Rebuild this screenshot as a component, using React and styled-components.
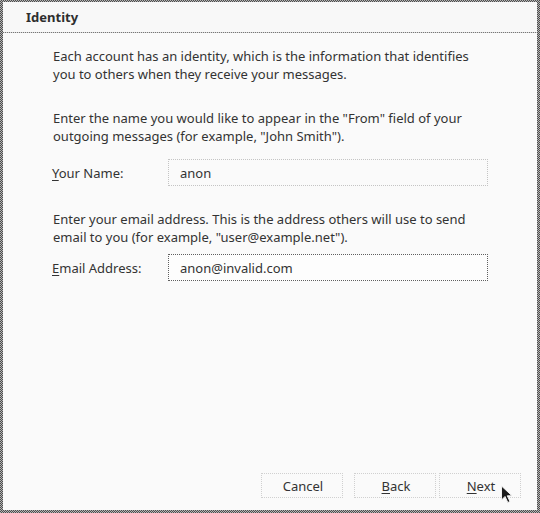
import React from 'react';
import styled, { createGlobalStyle } from 'styled-components';

const GlobalStyle = createGlobalStyle`
  html, body {
    margin: 0;
    padding: 0;
    background: #fafafa;
  }
  body {
    font-family: "Noto Sans", "Open Sans", "DejaVu Sans", sans-serif;
    font-size: 13px;
    color: #333;
  }
`;

const checker = `repeating-conic-gradient(#4d4d4d 0 25%, #b4b4b4 0 50%) 0 0 / 2px 2px`;

const Frame = styled.div`
  position: relative;
  box-sizing: border-box;
  width: 540px;
  height: 513px;
  padding: 2px 3px 3px 3px;
  background: ${checker};
`;

const Window = styled.div`
  display: flex;
  flex-direction: column;
  height: 100%;
  background: #fafafa;
`;

const Header = styled.div`
  display: flex;
  align-items: center;
  height: 30px;
  padding-left: 23px;
  font-weight: 700;
  font-size: 13px;
  color: #2e2e2e;
  background: #f8f8f8;
`;

const Divider = styled.div`
  height: 1px;
  background: repeating-linear-gradient(90deg, #777 0 1px, #d8d8d8 1px 2px);
`;

const Content = styled.div`
  padding: 14px 49px 0 50px;
`;

const Para = styled.p`
  margin: ${p => p.$top || 0}px 0 0 0;
  line-height: 18px;
`;

const Row = styled.div`
  display: flex;
  align-items: center;
  margin-top: ${p => p.$top}px;
`;

const Label = styled.label`
  width: 116px;
  flex: none;
  margin-left: -1px;
`;

const Field = styled.div`
  box-sizing: border-box;
  width: 320px;
  height: 27px;
  display: flex;
  align-items: center;
  padding-left: 11px;
  border: 1px dotted ${p => (p.$focused ? '#5f5f5f' : '#c4c4c4')};
  background: ${p => (p.$focused ? '#fdfdfd' : '#fafafa')};
`;

const Key = styled.span`
  text-decoration: underline;
  text-underline-offset: 2px;
`;

const Footer = styled.div`
  margin-top: auto;
  display: flex;
  justify-content: flex-end;
  padding: 0 16px 12px 0;
`;

const Button = styled.div`
  box-sizing: border-box;
  width: 82px;
  height: 25px;
  display: flex;
  align-items: center;
  justify-content: center;
  padding-left: 2px;
  margin-left: ${p => p.$gap || 0}px;
  border: 1px dotted #d0d0d0;
  color: #333;
`;

const Cursor = styled.svg`
  position: absolute;
  left: 500px;
  top: 485px;
`;

export default function App() {
  return (
    <>
      <GlobalStyle />
      <Frame>
        <Window>
          <Header>Identity</Header>
          <Divider />
          <Content>
            <Para>
              Each account has an identity, which is the information that identifies
              <br />
              you to others when they receive your messages.
            </Para>
            <Para $top={26}>
              Enter the name you would like to appear in the "From" field of your
              <br />
              outgoing messages (for example, "John Smith").
            </Para>
            <Row $top={14}>
              <Label><Key>Y</Key>our Name:</Label>
              <Field>anon</Field>
            </Row>
            <Para $top={24}>
              Enter your email address. This is the address others will use to send
              <br />
              email to you (for example, "user@example.net").
            </Para>
            <Row $top={8}>
              <Label><Key>E</Key>mail Address:</Label>
              <Field $focused>anon@invalid.com</Field>
            </Row>
          </Content>
          <Footer>
            <Button>Cancel</Button>
            <Button $gap={11}><Key>B</Key>ack</Button>
            <Button $gap={3}><Key>N</Key>ext</Button>
          </Footer>
        </Window>
        <Cursor width="14" height="20" viewBox="0 0 14 20">
          <path d="M1.5 1 L1.5 15 L5 11.5 L7.8 17.5 L10 16.5 L7.3 10.8 L12 10.8 Z" fill="#1a1a1a" stroke="#f0f0f0" strokeWidth="1" strokeLinejoin="round" />
        </Cursor>
      </Frame>
    </>
  );
}
